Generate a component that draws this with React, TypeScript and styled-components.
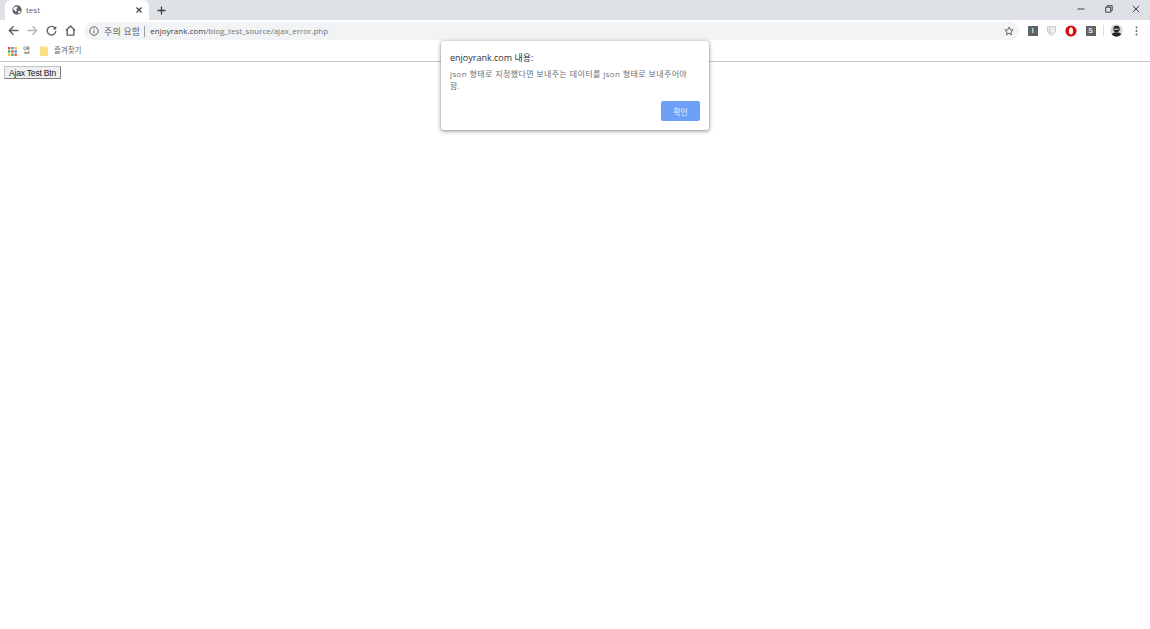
import React from "react";
import styled, { createGlobalStyle } from "styled-components";

const Global = createGlobalStyle`
  html, body { margin: 0; padding: 0; background: #fff; overflow: hidden; }
  body { font-family: "Liberation Sans", "Noto Sans CJK KR", sans-serif; }
  #root { width: 1150px; height: 629px; position: relative; }
`;
const KR = `"Roboto", "Noto Sans CJK KR", sans-serif`;
const OS = `"Open Sans", "Noto Sans CJK KR", sans-serif`;

const TabStrip = styled.div`
  height: 20px; background: #dee1e6; display: flex; align-items: flex-end; padding-left: 5px;
`;
const Tab = styled.div`
  width: 144px; height: 20px; box-sizing: border-box; background: #fff; border-radius: 6px 6px 0 0;
  display: flex; align-items: center; padding: 0 6px 0 7px; gap: 4px;
`;
const TabTitle = styled.span`
  flex: 1; font: 8px/10px ${OS}; color: #5f6368; margin-bottom: 1px;
`;
const NewTab = styled.div`
  width: 25px; height: 20px; display: flex; align-items: center; justify-content: center;
`;
const Spacer = styled.div`flex: 1;`;
const WinButtons = styled.div`
  display: flex; height: 18px; align-self: flex-start; align-items: center;
`;
const WinButton = styled.div`
  width: 27.5px; height: 18px; display: flex; align-items: center; justify-content: center;
`;
const Toolbar = styled.div`
  height: 21px; display: flex; align-items: center; padding-left: 4px; background: #fff;
`;
const NavButton = styled.div`
  width: 19px; height: 19px; display: flex; align-items: center; justify-content: center;
`;
const Omnibox = styled.div`
  width: 935px; height: 18px; margin-left: 4px; background: #f1f3f4; border-radius: 9px;
  display: flex; align-items: center; padding: 0 5px 0 5px; box-sizing: border-box; margin-top: 1px;
`;
const Secure = styled.span`
  font: 9px ${KR}; color: #5f6368; margin-left: 5px; letter-spacing: .2px; white-space: nowrap;
`;
const Divider = styled.div`
  width: 1px; height: 11px; background: #9aa0a6; margin: 0 5px 0 4px;
`;
const Url = styled.span`
  flex: 1; font: 8px/10px ${OS}; color: #70757a; white-space: nowrap; margin: 0 0 1px 0;
`;
const Host = styled.span`color: #3c4043;`;
const Extensions = styled.div`
  display: flex; align-items: center; padding-left: 4px;
`;
const ExtSlot = styled.div`
  width: 19.3px; height: 19px; display: flex; align-items: center; justify-content: center;
`;
const ExtBadge = styled.div`
  width: 10px; height: 10px; background: #5f6368; color: #e8e8e8; font: bold 7px/10px "Liberation Sans", sans-serif; text-align: center;
`;
const ExtDivider = styled.div`
  width: 1px; height: 11px; background: #dadce0; margin: 0 3px 0 3px;
`;
const Bookmarks = styled.div`
  height: 20px; border-bottom: 1px solid #c8c8c8; display: flex; align-items: center; padding-left: 8px; background: #fff;
`;
const BookmarkLabel = styled.span`
  font: 7.5px/9px ${KR}; color: #5f6368; margin-bottom: 1px;
`;
const AppsLabel = styled(BookmarkLabel)`margin-left: 6px; margin-right: 10px;`;
const FolderLabel = styled(BookmarkLabel)`margin-left: 6px;`;
const Page = styled.div`padding: 4px;`;
const TestButton = styled.button`
  display: block; width: 57px; height: 13px; padding: 0; box-sizing: border-box; margin: 0;
  background: #efefef; border: 1px solid; border-color: #c4c4c4 #808080 #808080 #c4c4c4;
  font: 8.5px/10px "Liberation Sans", sans-serif; letter-spacing: -.2px; color: #222;
`;
const Dialog = styled.div`
  position: absolute; left: 441px; top: 41px; width: 268px; height: 89px; box-sizing: border-box;
  background: #fff; border-radius: 2px; padding: 10px 9px 0 9px;
  box-shadow: 0 0 1px rgba(0,0,0,.4), 0 1px 4px rgba(0,0,0,.45);
`;
const DialogTitle = styled.div`
  font: 9px/13px ${OS}; color: #303336;
`;
const DialogBody = styled.div`
  font: 8px/12px ${OS}; color: #6b6f73; margin-top: 4px; width: 240px; letter-spacing: .38px; word-break: keep-all;
`;
const DialogActions = styled.div`
  display: flex; justify-content: flex-end; margin-top: 9px;
`;
const OkButton = styled.button`
  width: 39px; height: 20px; background: #6ea0f8; border: none; border-radius: 2px; padding: 0;
  color: #e4eeff; font: 8px ${KR};
`;

const S = { fill: "none", stroke: "#5f6368", strokeWidth: 1.3 } as const;

export default function App() {
  return (
    <>
      <Global />
      <TabStrip>
        <Tab>
          <svg width="10" height="10" viewBox="0 0 10 10">
            <circle cx="5" cy="5" r="4.7" fill="#5f6368" />
            <path d="M2 2.2 L4.8 1.6 L5.6 3 L4 4.2 L5 5.6 L3.8 7 L2.6 5.2 L1 4.2Z M6.4 6 L8.6 5.8 L7.6 8 L6 8.4Z" fill="#fff" />
          </svg>
          <TabTitle>test</TabTitle>
          <svg width="8" height="8" viewBox="0 0 8 8"><path d="M1.5 1.5l5 5M6.5 1.5l-5 5" stroke="#3c4043" strokeWidth="1.2" /></svg>
        </Tab>
        <NewTab>
          <svg width="9" height="9" viewBox="0 0 9 9"><path d="M4.5 .5v8M.5 4.5h8" stroke="#3c4043" strokeWidth="1.3" /></svg>
        </NewTab>
        <Spacer />
        <WinButtons>
          <WinButton><svg width="8" height="8" viewBox="0 0 8 8"><path d="M.5 4h7" stroke="#3c4043" strokeWidth="1" /></svg></WinButton>
          <WinButton><svg width="8" height="8" viewBox="0 0 8 8"><path d="M2.2 2V.7h5v5H6M.7 2.2h5v5h-5z" fill="none" stroke="#3c4043" strokeWidth="1" /></svg></WinButton>
          <WinButton><svg width="8" height="8" viewBox="0 0 8 8"><path d="M.8.8l6.4 6.4M7.2.8L.8 7.2" stroke="#3c4043" strokeWidth="1" /></svg></WinButton>
        </WinButtons>
      </TabStrip>
      <Toolbar>
        <NavButton><svg width="11" height="11" viewBox="0 0 10 10"><path d="M9.5 5H1.2M5 1.2L1.2 5 5 8.8" {...S} /></svg></NavButton>
        <NavButton><svg width="11" height="11" viewBox="0 0 10 10"><path d="M.5 5h8.3M5 1.2L8.8 5 5 8.8" {...S} stroke="#b4b7ba" /></svg></NavButton>
        <NavButton><svg width="11" height="11" viewBox="0 0 10 10"><path d="M8.4 3.2A3.9 3.9 0 1 0 8.9 5.5" {...S} /><path d="M9.3.8v3.3H6z" fill="#5f6368" /></svg></NavButton>
        <NavButton><svg width="11" height="11" viewBox="0 0 10 10"><path d="M.8 5L5 1l4.2 4M2 4.2v5h6v-5" {...S} /></svg></NavButton>
        <Omnibox>
          <svg width="10" height="10" viewBox="0 0 9 9">
            <circle cx="4.5" cy="4.5" r="3.8" fill="none" stroke="#5f6368" strokeWidth=".9" />
            <path d="M4.5 4v2.6M4.5 2.2v1" stroke="#5f6368" strokeWidth=".9" />
          </svg>
          <Secure>주의 요함</Secure>
          <Divider />
          <Url><Host>enjoyrank.com</Host>/blog_test_source/ajax_error.php</Url>
          <svg width="10" height="10" viewBox="0 0 10 10"><path d="M5 1l1.2 2.7 2.9.3-2.2 1.9.7 2.9L5 7.3 2.4 8.8l.7-2.9L.9 4l2.9-.3z" fill="none" stroke="#5f6368" strokeWidth="1" /></svg>
        </Omnibox>
        <Extensions>
          <ExtSlot><ExtBadge>I</ExtBadge></ExtSlot>
          <ExtSlot><svg width="11" height="12" viewBox="0 0 10 11"><path d="M1 1.5h8l-.6 5L5 10 1.6 6.5z" fill="#eceded" stroke="#c4c6c8" strokeWidth=".9" /><path d="M3.5 3v3.5L5 7.5" fill="none" stroke="#c4c6c8" /></svg></ExtSlot>
          <ExtSlot><svg width="12" height="12" viewBox="0 0 12 12"><circle cx="6" cy="6" r="5.6" fill="#d80f0f" /><ellipse cx="6" cy="6" rx="2" ry="3.6" fill="#fff" /></svg></ExtSlot>
          <ExtSlot><ExtBadge>S</ExtBadge></ExtSlot>
          <ExtDivider />
          <ExtSlot><svg width="13" height="13" viewBox="0 0 13 13"><circle cx="6.5" cy="6.5" r="6.2" fill="#d8d8d8" /><circle cx="6.5" cy="5" r="3.2" fill="#1f2226" /><path d="M1.8 10.5C3 7.5 10 7.5 11.2 10.5A6.2 6.2 0 0 1 1.8 10.5Z" fill="#1f2226" /><path d="M4 4.6h4.6v1.2H4z" fill="#d6c2b3" /></svg></ExtSlot>
          <ExtSlot><svg width="3" height="10" viewBox="0 0 3 10"><circle cx="1.5" cy="1.5" r="1" fill="#5f6368" /><circle cx="1.5" cy="5" r="1" fill="#5f6368" /><circle cx="1.5" cy="8.5" r="1" fill="#5f6368" /></svg></ExtSlot>
        </Extensions>
      </Toolbar>
      <Bookmarks>
        <svg width="9" height="9" viewBox="0 0 9 9">
          {[0, 1, 2].flatMap((r) =>
            [0, 1, 2].map((c) => (
              <rect key={`${r}${c}`} x={c * 3.3} y={r * 3.3} width="2.3" height="2.3"
                fill={["#ea4335", "#4285f4", "#fbbc05", "#34a853", "#ea4335", "#4285f4", "#fbbc05", "#34a853", "#ea4335"][r * 3 + c]} />
            ))
          )}
        </svg>
        <AppsLabel>앱</AppsLabel>
        <svg width="8" height="10" viewBox="0 0 8 10"><path d="M0 .5h6.5L8 2v8H0z" fill="#fbdf85" /></svg>
        <FolderLabel>즐겨찾기</FolderLabel>
      </Bookmarks>
      <Page>
        <TestButton>Ajax Test Btn</TestButton>
      </Page>
      <Dialog>
        <DialogTitle>enjoyrank.com 내용:</DialogTitle>
        <DialogBody>json 형태로 지정했다면 보내주는 데이터를 json 형태로 보내주어야 함.</DialogBody>
        <DialogActions><OkButton>확인</OkButton></DialogActions>
      </Dialog>
    </>
  );
}
